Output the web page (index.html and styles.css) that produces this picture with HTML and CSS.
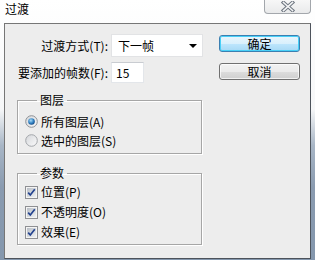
FILE: index.html
```html
<!DOCTYPE html>
<html lang="zh-CN">
<head>
    <meta charset="UTF-8">
    <title>过渡</title>
    <link rel="stylesheet" href="styles.css">
</head>
<body>
    <div class="window">
        <div class="titlebar">
            <span class="title">过渡</span>
            <div class="close">
                <svg width="14" height="11" viewBox="0 0 14 11">
                    <path d="M2.5 1.5 L11.5 9.5 M11.5 1.5 L2.5 9.5" stroke="#6e7680" stroke-width="3.6" stroke-linecap="square"/>
                    <path d="M2.5 1.5 L11.5 9.5 M11.5 1.5 L2.5 9.5" stroke="#f4f5f6" stroke-width="1.6" stroke-linecap="square"/>
                </svg>
            </div>
        </div>

        <div class="client">
            <div class="main">
                <div class="fields">
                    <label class="field-label">过渡方式(T):</label>
                    <div class="dropdown">
                        <span>下一帧</span>
                        <span class="arrow"></span>
                    </div>
                    <label class="field-label">要添加的帧数(F):</label>
                    <div class="textbox">15</div>
                </div>

                <fieldset class="group layers">
                    <legend>图层</legend>
                    <label class="option">
                        <svg class="radio" width="13" height="13" viewBox="0 0 13 13">
                            <defs>
                                <linearGradient id="rbg" x1="0" y1="0" x2="1" y2="1">
                                    <stop offset="0" stop-color="#d4d6da"/>
                                    <stop offset="1" stop-color="#fbfbfb"/>
                                </linearGradient>
                                <radialGradient id="rdot" cx="0.4" cy="0.35" r="0.7">
                                    <stop offset="0" stop-color="#a9dcf8"/>
                                    <stop offset="0.6" stop-color="#2f7fc0"/>
                                    <stop offset="1" stop-color="#14467e"/>
                                </radialGradient>
                            </defs>
                            <circle cx="6.5" cy="6.5" r="5.8" fill="url(#rbg)" stroke="#8e9195"/>
                            <circle cx="6.5" cy="6.5" r="3.3" fill="url(#rdot)"/>
                        </svg>
                        所有图层(A)
                    </label>
                    <label class="option">
                        <svg class="radio" width="13" height="13" viewBox="0 0 13 13">
                            <circle cx="6.5" cy="6.5" r="5.8" fill="url(#rbg)" stroke="#a3a6aa"/>
                        </svg>
                        选中的图层(S)
                    </label>
                </fieldset>

                <fieldset class="group params">
                    <legend>参数</legend>
                    <label class="option">
                        <svg class="check" width="13" height="13" viewBox="0 0 13 13">
                            <defs>
                                <linearGradient id="cbg" x1="0" y1="0" x2="1" y2="1">
                                    <stop offset="0" stop-color="#b9bec6"/>
                                    <stop offset="1" stop-color="#eef0f2"/>
                                </linearGradient>
                            </defs>
                            <rect x="0.5" y="0.5" width="12" height="12" fill="#f4f4f4" stroke="#8e8f93"/>
                            <rect x="2" y="2" width="9" height="9" fill="url(#cbg)"/>
                            <path d="M3.2 6.6 L5.3 9 L9.8 3.3" fill="none" stroke="#23428f" stroke-width="1.7"/>
                        </svg>
                        位置(P)
                    </label>
                    <label class="option">
                        <svg class="check" width="13" height="13" viewBox="0 0 13 13">
                            <rect x="0.5" y="0.5" width="12" height="12" fill="#f4f4f4" stroke="#8e8f93"/>
                            <rect x="2" y="2" width="9" height="9" fill="url(#cbg)"/>
                            <path d="M3.2 6.6 L5.3 9 L9.8 3.3" fill="none" stroke="#23428f" stroke-width="1.7"/>
                        </svg>
                        不透明度(O)
                    </label>
                    <label class="option">
                        <svg class="check" width="13" height="13" viewBox="0 0 13 13">
                            <rect x="0.5" y="0.5" width="12" height="12" fill="#f4f4f4" stroke="#8e8f93"/>
                            <rect x="2" y="2" width="9" height="9" fill="url(#cbg)"/>
                            <path d="M3.2 6.6 L5.3 9 L9.8 3.3" fill="none" stroke="#23428f" stroke-width="1.7"/>
                        </svg>
                        效果(E)
                    </label>
                </fieldset>
            </div>

            <div class="buttons">
                <button class="btn default">确定</button>
                <button class="btn">取消</button>
            </div>
        </div>
    </div>
</body>
</html>
```

FILE: styles.css
```css
html, body {
    margin: 0;
    padding: 0;
}

body {
    width: 315px;
    height: 260px;
    overflow: hidden;
    font-family: "Noto Sans CJK SC", "Noto Sans", sans-serif;
    font-size: 12px;
    color: #000;
    background: linear-gradient(to bottom, #ffffff 0, #f6f7f8 42%, #a8b6c6 56%, #8a9bb0 72%, #8497ad 100%);
}

.window {
    padding: 0 4px 0 4px;
}

/* title bar with the inactive close box */
.titlebar {
    height: 23px;
    display: flex;
    justify-content: space-between;
    align-items: flex-start;
}

.title {
    padding: 1px 0 0 1px;
    line-height: 16px;
    font-size: 12px;
}

.close {
    width: 47px;
    height: 14px;
    box-sizing: border-box;
    border: 1px solid #a3a7ac;
    border-top: none;
    border-radius: 0 0 4px 4px;
    background: linear-gradient(to bottom, #f7f7f7, #e9eaeb);
    display: flex;
    justify-content: center;
    align-items: center;
}

/* client area */
.client {
    width: 307px;
    height: 236px;
    box-sizing: border-box;
    border: 1px solid;
    border-color: #767676 #4d535b #4d535b #767676;
    background-color: #ededed;
    display: flex;
    align-items: flex-start;
    padding: 10px 0 0 12px;
}

.main {
    width: 185px;
}

.fields {
    display: grid;
    grid-template-columns: 93px 92px;
    grid-template-rows: 23px 21px;
    column-gap: 3px;
    row-gap: 5px;
    margin-left: -2px;
    align-items: center;
}

.field-label {
    text-align: right;
    white-space: nowrap;
    line-height: 16px;
}

.dropdown {
    height: 23px;
    box-sizing: border-box;
    border: 1px solid #e2e3e5;
    background: #fff;
    display: flex;
    align-items: center;
    justify-content: space-between;
    padding: 0 5px 0 6px;
    line-height: 16px;
}

.arrow {
    width: 0;
    height: 0;
    border-left: 4px solid transparent;
    border-right: 4px solid transparent;
    border-top: 4px solid #000;
    margin-top: 1px;
}

.textbox {
    width: 33px;
    height: 21px;
    box-sizing: border-box;
    border: 1px solid #e3e6ea;
    border-top-color: #c9ccd1;
    background: #fff;
    padding: 0 0 0 4px;
    line-height: 19px;
}

/* group boxes */
.group {
    width: 185px;
    box-sizing: border-box;
    margin: 0;
    padding: 0 0 3px 7px;
    border: 1px solid #a6a6a6;
    box-shadow: inset 1px 1px 0 #fff, 1px 1px 0 #fff;
}

.group legend {
    margin-left: 12px;
    padding: 0 3px;
    line-height: 16px;
}

.layers {
    margin-top: 9px;
}

.layers .option:first-of-type {
    margin-top: 4px;
}

.params {
    margin-top: 11px;
    padding-bottom: 2px;
}

.params .option:first-of-type {
    margin-top: 1px;
}

.option {
    display: flex;
    align-items: center;
    height: 19px;
    line-height: 16px;
    white-space: nowrap;
}

.params .option {
    height: 20px;
}

.option svg {
    display: block;
    margin-right: 3px;
    flex: none;
}

/* push buttons */
.buttons {
    margin: 1px 0 0 17px;
    display: flex;
    flex-direction: column;
    gap: 11px;
}

.btn {
    width: 81px;
    height: 17px;
    box-sizing: border-box;
    padding: 0;
    font-family: inherit;
    font-size: 12px;
    line-height: 14px;
    color: #000;
    border: 1px solid #707070;
    border-radius: 3px;
    background: linear-gradient(to bottom, #f2f2f2 0, #ebebeb 50%, #dddddd 51%, #cfcfcf 100%);
    box-shadow: inset 0 0 0 1px rgba(255, 255, 255, 0.7);
}

.btn.default {
    border-color: #3c7fb1;
    background: linear-gradient(to bottom, #eaf6fd 0, #d9f0fc 50%, #bee6fd 51%, #a7d9f5 100%);
    box-shadow: inset 0 0 0 1px #48d0f7;
}
```
